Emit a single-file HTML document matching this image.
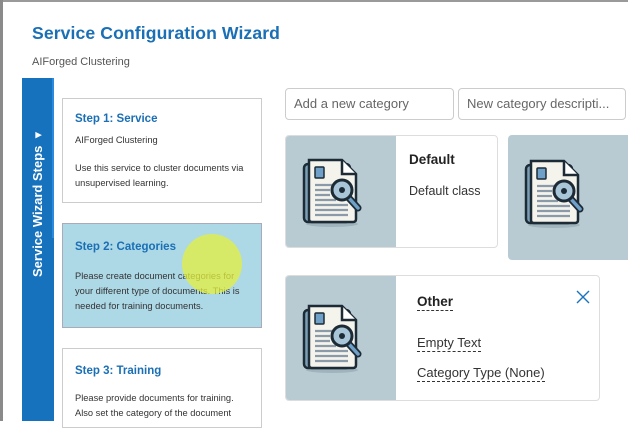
<!DOCTYPE html>
<html><head><meta charset="utf-8"><style>
*{margin:0;padding:0;box-sizing:border-box}
body{width:628px;height:421px;overflow:hidden;background:#fff;font-family:"Liberation Sans","DejaVu Sans",sans-serif;position:relative}
.abs{position:absolute}
.edge{left:0;top:0;width:3px;height:421px;background:#8a8a8a}
.topedge{left:0;top:0;width:628px;height:2px;background:#9a9a9a}
h1{position:absolute;left:32px;top:23px;font-size:17.6px;font-weight:bold;color:#1a6fb5;letter-spacing:0.1px}
.sub{left:32px;top:56px;font-size:11px;color:#555}
.bar{left:22px;top:78px;width:32px;height:343px;background:#1672bd}
.barl{left:52px;top:78px;width:2px;height:160px;background:#2a8ae0}
.vt{left:22px;top:78px;width:32px;height:200px}
.vt span{position:absolute;left:16px;top:199px;transform-origin:0 0;transform:rotate(-90deg) translate(0,-8px);color:#fff;font-weight:bold;font-size:13px;white-space:nowrap}
.step{left:62px;width:200px;border:1px solid #ccc;background:#fff;padding:16px 12px;color:#333}
.step b{display:block;color:#1a6fb5;font-size:11.5px;margin-bottom:8px}
.step p{font-size:9.3px;line-height:15px}
.inp{top:88px;height:32px;border:1px solid #ccc;border-radius:4px;font-size:13px;color:#666;padding:7px 8px;white-space:nowrap;overflow:hidden}
.card{border:1px solid #ddd;border-radius:4px;background:#fff;overflow:hidden}
.img{position:absolute;left:0;top:0;width:110px;height:100%;background:#b9cbd2}
.img svg{position:absolute;left:10px;top:12px}
.dash{border-bottom:1px dashed #333;display:inline-block;line-height:16px}
</style></head><body>
<svg width="0" height="0" style="position:absolute"><defs><symbol id="doc" viewBox="0 0 90 90">
<ellipse cx="36" cy="76" rx="26" ry="3" fill="#9fb4bd"/>
<rect x="8" y="16" width="46" height="58" rx="4" fill="#7d9fb6" stroke="#1d2b36" stroke-width="2.5"/>
<path d="M13 12 H46 L60 26 V71 Q60 74 57 74 H16 Q13 74 13 71 Z" fill="#f4f3ec" stroke="#1d2b36" stroke-width="2.5"/>
<path d="M46 12 V26 H60" fill="#fff" stroke="#1d2b36" stroke-width="2.5"/>
<rect x="19" y="19" width="9" height="11" rx="1" fill="#6fa0c8" stroke="#1d2b36" stroke-width="1.5"/>
<g stroke="#8a9aa8" stroke-width="2.2"><line x1="19" y1="37" x2="36" y2="37"/><line x1="19" y1="42" x2="34" y2="42"/><line x1="19" y1="47" x2="34" y2="47"/><line x1="19" y1="52" x2="40" y2="52"/><line x1="19" y1="57" x2="52" y2="57"/><line x1="19" y1="62" x2="52" y2="62"/><line x1="19" y1="67" x2="52" y2="67"/></g>
<line x1="52" y1="49" x2="62" y2="60" stroke="#1d2b36" stroke-width="7" stroke-linecap="round"/>
<line x1="52" y1="49" x2="62" y2="60" stroke="#6fa0c8" stroke-width="3.5" stroke-linecap="round"/>
<circle cx="46" cy="42" r="10" fill="#a9c6d8" stroke="#1d2b36" stroke-width="3"/>
<circle cx="46" cy="42" r="3" fill="#1d2b36"/>
</symbol></defs></svg>
<div class="abs topedge"></div>
<div class="abs edge"></div>
<h1>Service Configuration Wizard</h1>
<div class="abs sub">AIForged Clustering</div>
<div class="abs bar"></div><div class="abs barl"></div>
<div class="abs vt"><span>Service Wizard Steps &nbsp;▾</span></div>

<div class="abs step" style="top:98px;height:105px;padding-top:14px"><b>Step 1: Service</b><p>AIForged Clustering</p><p style="margin-top:13px">Use this service to cluster documents via unsupervised learning.</p></div>
<div class="abs step" style="top:223px;height:105px;background:#add8e6;border-color:#aab;padding-right:16px;padding-top:17px"><b>Step 2: Categories</b><p style="margin-top:16px">Please create document categories for your different type of documents. This is needed for training documents.</p></div>
<div class="abs" style="left:182px;top:234px;width:60px;height:60px;border-radius:50%;background:rgba(230,240,60,0.75)"></div>
<div class="abs step" style="top:348px;height:80px;padding-top:16px"><b>Step 3: Training</b><p style="margin-top:14px">Please provide documents for training. Also set the category of the document</p></div>

<div class="abs inp" style="left:285px;width:169px">Add a new category</div>
<div class="abs inp" style="left:458px;width:168px">New category descripti...</div>

<div class="abs card" style="left:285px;top:135px;width:213px;height:113px"><div class="img"><svg width="90" height="90"><use href="#doc"/></svg></div>
<div class="abs" style="left:123px;top:16px;font-weight:bold;font-size:13.5px;color:#222">Default</div>
<div class="abs" style="left:123px;top:48px;font-size:12.5px;color:#333">Default class</div></div>
<div class="abs" style="left:508px;top:135px;width:120px;height:125px;background:#b9cbd2;border-radius:4px 0 0 4px"><svg width="90" height="90" style="position:absolute;left:10px;top:14px"><use href="#doc"/></svg></div>

<div class="abs card" style="left:285px;top:275px;width:315px;height:126px"><div class="img"><svg width="90" height="90" style="top:18px"><use href="#doc"/></svg></div>
<div class="abs" style="left:131px;top:18px;font-weight:bold;font-size:13.5px;color:#222"><span class="dash">Other</span></div>
<div class="abs" style="left:131px;top:59px;font-size:13px;color:#333"><span class="dash">Empty Text</span></div>
<div class="abs" style="left:131px;top:89px;font-size:13px;color:#333"><span class="dash">Category Type (None)</span></div>
<svg class="abs" style="left:290px;top:14px" width="14" height="14"><path d="M1 1 L13 13 M13 1 L1 13" stroke="#1a73c0" stroke-width="1.4"/></svg>
</div>
</body></html>
